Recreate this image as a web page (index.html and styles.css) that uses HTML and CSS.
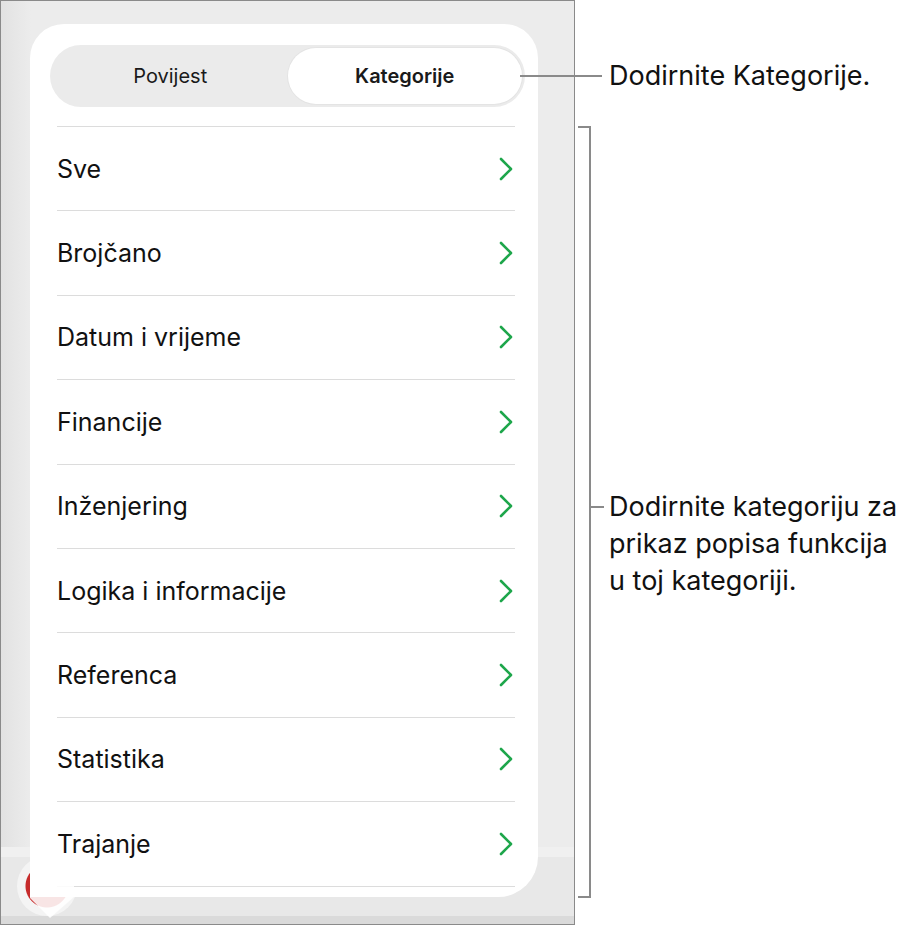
FILE: index.html
```html
<!DOCTYPE html>
<html lang="hr">
<head>
    <meta charset="UTF-8">
    <meta name="viewport" content="width=device-width, initial-scale=1.0">
    <title>Kategorije</title>
    <link rel="stylesheet" href="styles.css">
</head>
<body>
<div class="figure">

    <!-- iPad screen area -->
    <div class="screen">
        <div class="red-btn"></div>

        <div class="popover">
            <div class="segmented">
                <div class="seg">Povijest</div>
                <div class="seg selected">Kategorije</div>
            </div>

            <ul class="list">
                <li>Sve <svg class="chev" viewBox="0 0 14 24"><path d="M2 2 L12 12 L2 22"/></svg></li>
                <li>Brojčano <svg class="chev" viewBox="0 0 14 24"><path d="M2 2 L12 12 L2 22"/></svg></li>
                <li>Datum i vrijeme <svg class="chev" viewBox="0 0 14 24"><path d="M2 2 L12 12 L2 22"/></svg></li>
                <li>Financije <svg class="chev" viewBox="0 0 14 24"><path d="M2 2 L12 12 L2 22"/></svg></li>
                <li>Inženjering <svg class="chev" viewBox="0 0 14 24"><path d="M2 2 L12 12 L2 22"/></svg></li>
                <li>Logika i informacije <svg class="chev" viewBox="0 0 14 24"><path d="M2 2 L12 12 L2 22"/></svg></li>
                <li>Referenca <svg class="chev" viewBox="0 0 14 24"><path d="M2 2 L12 12 L2 22"/></svg></li>
                <li>Statistika <svg class="chev" viewBox="0 0 14 24"><path d="M2 2 L12 12 L2 22"/></svg></li>
                <li>Trajanje <svg class="chev" viewBox="0 0 14 24"><path d="M2 2 L12 12 L2 22"/></svg></li>
            </ul>
        </div>

        <svg class="tail" viewBox="0 0 50 40"><path d="M0 0 L0 18 L20 38 L44 17 L44 0 Z"/></svg>
        <div class="toolbar"></div>
    </div>

    <!-- callouts -->
    <div class="notes">
        <p class="note">Dodirnite Kategorije.</p>
        <p class="note note-2">Dodirnite kategoriju za<br>prikaz popisa funkcija<br>u toj kategoriji.</p>
    </div>

    <div class="leader leader-1"></div>
    <div class="bracket"></div>
    <div class="leader leader-2"></div>
</div>
</body>
</html>
```

FILE: styles.css
```css
body {
  margin: 0;
  background: #fff;
  font-family: Inter, "Noto Sans", sans-serif;
  color: #111;
}

.figure {
  position: relative;
  display: flex;
  width: 915px;
  height: 928px;
}

/* screen */
.screen {
  position: relative;
  width: 575px;
  height: 925px;
  border: 1px solid #8a8a8a;
  background: linear-gradient(90deg, #e2e2e2 0, #ececec 30px, #ececec 100%);
  padding: 23px 0 0 29px;
  box-sizing: border-box;
  flex-shrink: 0;
}

.toolbar {
  position: absolute;
  left: 0;
  right: 0;
  bottom: 0;
  height: 77px;
  background: linear-gradient(#f0f0f0 0, #f0f0f0 10px, #e8e8e8 10px, #e8e8e8 69px, #dadada 69px);
  z-index: 0;
}

.red-btn {
  position: absolute;
  left: 16px;
  top: 855px;
  width: 60px;
  height: 60px;
  border-radius: 50%;
  background: radial-gradient(circle, #c62b2b 0, #c62b2b 21px, #f4f4f4 22px);
  z-index: 1;
}

.popover {
  position: relative;
  z-index: 2;
  width: 508px;
  height: 873px;
  background: #fff;
  border-radius: 34px 34px 40px 0;
  padding: 21px 13px 0 20px;
  box-sizing: border-box;
}

.tail {
  position: absolute;
  left: 29px;
  top: 879px;
  width: 50px;
  height: 40px;
  z-index: 2;
}

.tail path {
  fill: #fff;
  opacity: 0.88;
}

/* segmented control */
.segmented {
  display: flex;
  height: 62px;
  padding: 3px;
  box-sizing: border-box;
  background: #ebebeb;
  border-radius: 31px;
}

.seg {
  flex: 1;
  display: flex;
  align-items: center;
  justify-content: center;
  font-size: 20px;
  color: #1a1a1a;
  border-radius: 28px;
}

.seg.selected {
  background: #fff;
  font-weight: 600;
  box-shadow: 0 0 0 1px #e4e4e4;
}

/* list */
.list {
  list-style: none;
  margin: 19px 10px 0 7px;
  padding: 0;
  border-top: 1px solid #dcdcdc;
}

.list li {
  display: flex;
  align-items: center;
  justify-content: space-between;
  height: 84.4px;
  box-sizing: border-box;
  border-bottom: 1px solid #dcdcdc;
  font-size: 25px;
  color: #111;
  padding-right: 2px;
}

.chev {
  width: 14px;
  height: 24px;
}

.chev path {
  fill: none;
  stroke: #1ea64b;
  stroke-width: 2.6;
  stroke-linecap: round;
  stroke-linejoin: round;
}

/* notes */
.notes {
  padding: 57px 0 0 34px;
}

.note {
  margin: 0;
  font-size: 27px;
  line-height: 37px;
  color: #111;
}

.note-2 {
  margin-top: 394px;
}

.leader,
.bracket {
  z-index: 5;
}

.leader-1 {
  position: absolute;
  left: 520px;
  top: 75px;
  width: 82px;
  height: 2px;
  background: #8a8a8a;
}

.bracket {
  position: absolute;
  left: 578px;
  top: 126px;
  width: 11px;
  height: 768px;
  border: 2px solid #8a8a8a;
  border-left: none;
}

.leader-2 {
  position: absolute;
  left: 591px;
  top: 506px;
  width: 13px;
  height: 2px;
  background: #8a8a8a;
}
```
